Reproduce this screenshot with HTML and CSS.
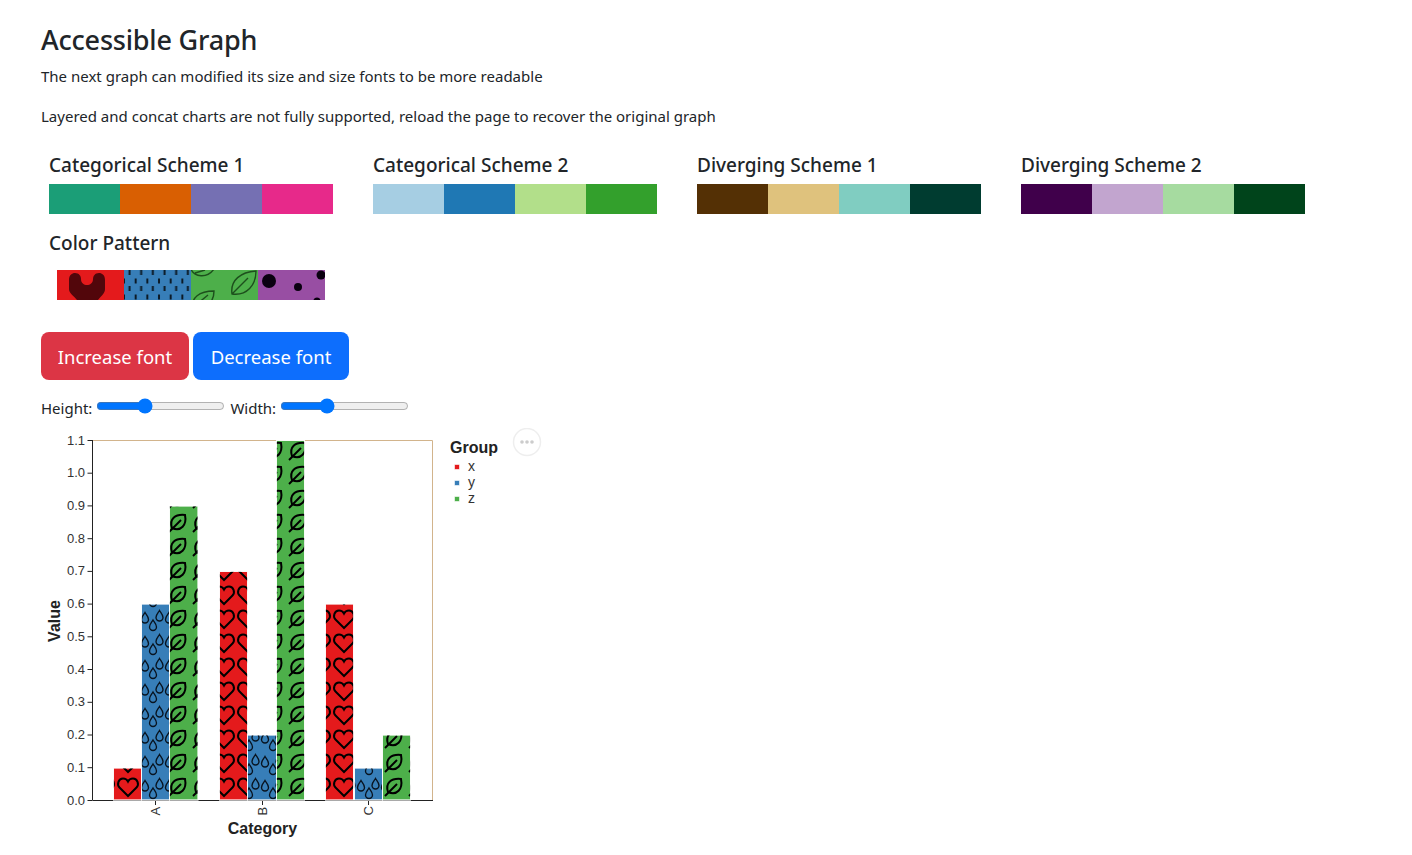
FILE: index.html
```html
<!DOCTYPE html>
<html lang="en">
<head>
  <meta charset="UTF-8">
  <title>Accessible Graph</title>
  <link rel="stylesheet" href="styles.css">
</head>
<body>
  <div class="container">
    <h1>Accessible Graph</h1>
    <p>The next graph can modified its size and size fonts to be more readable</p>
    <p>Layered and concat charts are not fully supported, reload the page to recover the original graph</p>

    <div class="schemes">
      <div class="scheme">
        <h5>Categorical Scheme 1</h5>
        <div class="swatches">
          <span style="background:#1b9e77"></span><span style="background:#d95f02"></span><span style="background:#7570b3"></span><span style="background:#e7298a"></span>
        </div>
      </div>
      <div class="scheme">
        <h5>Categorical Scheme 2</h5>
        <div class="swatches">
          <span style="background:#a6cee3"></span><span style="background:#1f78b4"></span><span style="background:#b2df8a"></span><span style="background:#33a02c"></span>
        </div>
      </div>
      <div class="scheme">
        <h5>Diverging Scheme 1</h5>
        <div class="swatches">
          <span style="background:#543005"></span><span style="background:#dfc27d"></span><span style="background:#80cdc1"></span><span style="background:#003c30"></span>
        </div>
      </div>
      <div class="scheme">
        <h5>Diverging Scheme 2</h5>
        <div class="swatches">
          <span style="background:#40004b"></span><span style="background:#c2a5cf"></span><span style="background:#a6dba0"></span><span style="background:#00441b"></span>
        </div>
      </div>
      <div class="scheme pattern-scheme">
        <h5>Color Pattern</h5>
        <svg class="pattern-strip" width="268" height="30" viewBox="0 0 268 30">
          <defs>
            <pattern id="dashes" patternUnits="userSpaceOnUse" x="67" y="0" width="11.67" height="16">
              <rect x="4.500" y="0" width="2" height="5" fill="#0b1a26"/>
              <rect x="-1" y="8.500" width="2" height="5" fill="#0b1a26"/>
              <rect x="10.670" y="8.500" width="2" height="5" fill="#0b1a26"/>
            </pattern>
            <clipPath id="greenCell"><rect x="134" width="67" height="30"/></clipPath>
          </defs>
          <rect width="67" height="30" fill="#e41a1c"/>
          <path d="M12 10C12 5 15 3 18 3C22 3 24 6 24 9C24 13 27 15 30 15C33 15 36 13 36 9C36 6 38 3 42 3C45 3 48 5 48 10V19C48 23 45 25 41 30H20C16 25 12 23 12 19Z" fill="#52060b"/>
          <rect x="67" width="67" height="30" fill="#377eb8"/>
          <rect x="67" width="67" height="30" fill="url(#dashes)"/>
          <rect x="134" width="67" height="30" fill="#4daf4a"/>
          <g clip-path="url(#greenCell)" fill="none" stroke="#1d4f1c" stroke-width="1.4">
            <path d="M175 24C173 10 184 2 199 1C199 15 190 26 175 24ZM175 24L191 8"/>
            <path d="M136 38C134 28 142 21 157 21C157 33 148 40 136 38ZM140 34L151 25"/>
            <path d="M134 -1C137 7 150 9 157 -1M138 3L148 0"/>
          </g>
          <rect x="201" width="67" height="30" fill="#984ea3"/>
          <g fill="#0a0010">
            <circle cx="212" cy="11" r="7"/>
            <circle cx="241" cy="17" r="4"/>
            <circle cx="264" cy="5" r="4.500"/>
            <circle cx="260" cy="31" r="3.500"/>
          </g>
        </svg>
      </div>
    </div>

    <div class="buttons">
      <button class="btn btn-danger">Increase font</button>
      <button class="btn btn-primary">Decrease font</button>
    </div>

    <div class="sliders">
      <label for="height">Height:</label>
      <input type="range" id="height" min="0" max="100" value="36">
      <label for="width">Width:</label>
      <input type="range" id="width" min="0" max="100" value="34">
    </div>

    <svg class="chart" width="520" height="420" viewBox="41 428 520 420">
      <defs>
        <pattern id="hearts" patternUnits="userSpaceOnUse" x="-4" y="7" width="24" height="24">
          <path d="M12 21L3.500 12.500C0.500 9.500 2.500 3.500 7 3.500C9 3.500 11 4.500 12 6.500C13 4.500 15 3.500 17 3.500C21.500 3.500 23.500 9.500 20.500 12.500Z" fill="none" stroke="#000" stroke-width="2"/>
        </pattern>
        <pattern id="drops" patternUnits="userSpaceOnUse" x="-4" y="8" width="24" height="24">
          <g fill="none" stroke="#071320" stroke-width="1.400">
            <path d="M13 12C14 14 16.500 16 16.500 19A3.500 3.500 0 0 1 9.500 19C9.500 16 12 14 13 12Z"/>
            <path d="M19.500 2.500C20.500 4.500 23 6.500 23 9.500A3.500 3.500 0 0 1 16 9.500C16 6.500 18.500 4.500 19.500 2.500Z"/>
            <path d="M5 4.500C6 6.500 8.500 8.500 8.500 11.500A3.500 3.500 0 0 1 1.500 11.500C1.500 8.500 4 6.500 5 4.500Z"/>
          </g>
        </pattern>
        <pattern id="leaves" patternUnits="userSpaceOnUse" x="-2" y="7" width="24" height="24">
          <g transform="translate(12 12)" fill="none" stroke="#000" stroke-width="2">
            <path d="M-6 5C-9 -4 -3 -9 7 -8C9 2 3 9 -6 5Z"/>
            <path d="M-9 9L3 -3"/>
          </g>
        </pattern>
      </defs>

      <!-- frame and axes -->
      <path class="frame" d="M92.500 440.500H432.500V800"/>
      <path class="axis" d="M92.500 440V800.500H433"/>
      <path class="axis" d="M87.500 440.500H92M87.500 473.200H92M87.500 505.900H92M87.500 538.700H92M87.500 571.400H92M87.500 604.100H92M87.500 636.800H92M87.500 669.500H92M87.500 702.300H92M87.500 735H92M87.500 767.700H92M87.500 800.500H92M155.500 800V805M262.500 800V805M368.500 800V805"/>

      <g class="tick-labels">
        <text x="85" y="445">1.1</text>
        <text x="85" y="477">1.0</text>
        <text x="85" y="510">0.9</text>
        <text x="85" y="543">0.8</text>
        <text x="85" y="575">0.7</text>
        <text x="85" y="608">0.6</text>
        <text x="85" y="641">0.5</text>
        <text x="85" y="674">0.4</text>
        <text x="85" y="706">0.3</text>
        <text x="85" y="739">0.2</text>
        <text x="85" y="772">0.1</text>
        <text x="85" y="805">0.0</text>
      </g>
      <g class="cat-labels">
        <text transform="translate(160 815.500) rotate(-90)">A</text>
        <text transform="translate(267 815.500) rotate(-90)">B</text>
        <text transform="translate(373 815.500) rotate(-90)">C</text>
      </g>
      <text class="axis-title" x="262.500" y="834" text-anchor="middle">Category</text>
      <text class="axis-title" transform="translate(60 621) rotate(-90)" text-anchor="middle">Value</text>

      <!-- bars -->
      <g class="bar" fill="#e41a1c">
        <rect x="113.500" y="768" width="28" height="32"/>
        <rect x="219.500" y="571.500" width="28" height="228.500"/>
        <rect x="325.500" y="604" width="28" height="196"/>
      </g>
      <g class="bar" fill="url(#hearts)">
        <rect x="113.500" y="768" width="28" height="32"/>
        <rect x="219.500" y="571.500" width="28" height="228.500"/>
        <rect x="325.500" y="604" width="28" height="196"/>
      </g>
      <g class="bar" fill="#377eb8">
        <rect x="141.500" y="604" width="28" height="196"/>
        <rect x="247.500" y="735" width="29" height="65"/>
        <rect x="354.500" y="768" width="28" height="32"/>
      </g>
      <g class="bar" fill="url(#drops)">
        <rect x="141.500" y="604" width="28" height="196"/>
        <rect x="247.500" y="735" width="29" height="65"/>
        <rect x="354.500" y="768" width="28" height="32"/>
      </g>
      <g class="bar" fill="#4daf4a">
        <rect x="169.500" y="506" width="28.500" height="294"/>
        <rect x="276.500" y="440.500" width="28" height="359.500"/>
        <rect x="382.500" y="735" width="28" height="65"/>
      </g>
      <g class="bar" fill="url(#leaves)">
        <rect x="169.500" y="506" width="28.500" height="294"/>
        <rect x="276.500" y="440.500" width="28" height="359.500"/>
        <rect x="382.500" y="735" width="28" height="65"/>
      </g>

      <!-- legend -->
      <text class="axis-title" x="450" y="453">Group</text>
      <rect class="legend-mark" x="454.500" y="464.500" width="5" height="5" fill="#e41a1c"/>
      <rect class="legend-mark" x="454.500" y="480.500" width="5" height="5" fill="#377eb8"/>
      <rect class="legend-mark" x="454.500" y="496.500" width="5" height="5" fill="#4daf4a"/>
      <text class="legend-label" x="468" y="471">x</text>
      <text class="legend-label" x="468" y="487">y</text>
      <text class="legend-label" x="468" y="503">z</text>

      <!-- actions menu -->
      <circle class="menu-circle" cx="527" cy="442" r="13.500"/>
      <g class="menu-dots">
        <circle cx="522" cy="442" r="1.800"/>
        <circle cx="527" cy="442" r="1.800"/>
        <circle cx="532" cy="442" r="1.800"/>
      </g>
    </svg>
  </div>
</body>
</html>
```

FILE: styles.css
```css
body {
  margin: 0;
  font-family: "Noto Sans", "Open Sans", sans-serif;
  font-size: 16px;
  line-height: 24px;
  color: #212529;
  background: white;
}
.container {
  padding: 23px 0 0 41px;
}
h1 {
  margin: 0 0 7px;
  font-size: 27px;
  line-height: 34px;
  font-weight: 500;
  letter-spacing: -0.2px;
}
p {
  margin: 0 0 16px;
  font-size: 15px;
}
.schemes {
  display: grid;
  grid-template-columns: repeat(4, 324px);
  row-gap: 17px;
  margin-top: 25px;
}
.scheme {
  padding-left: 8px;
}
h5 {
  margin: 0 0 7px;
  font-size: 19px;
  line-height: 24px;
  font-weight: 500;
}
.swatches {
  display: flex;
  width: 284px;
  height: 30px;
}
.swatches span {
  flex: 1;
}
.pattern-strip {
  display: block;
  margin: 15px 0 0 8px;
}
.pattern-scheme h5 {
  margin-bottom: 0;
}
.buttons {
  display: flex;
  gap: 4px;
  margin-top: 32px;
}
.btn {
  height: 48px;
  padding: 1px 0 0;
  border: none;
  border-radius: 8px;
  color: white;
  font-family: inherit;
  font-size: 18.500px;
  white-space: nowrap;
  cursor: pointer;
}
.btn-danger {
  width: 148px;
  background: #dc3545;
}
.btn-primary {
  width: 156px;
  background: #0d6efd;
}
.sliders {
  display: flex;
  align-items: flex-start;
  margin-top: 16px;
  height: 32px;
  font-size: 15px;
}
.sliders input {
  width: 129px;
  margin: 2px 5px 0 4px;
}
.chart {
  display: block;
}
.frame {
  fill: none;
  stroke: tan;
}
.axis {
  fill: none;
  stroke: #222;
}
.tick-labels text {
  font-family: "Liberation Sans", sans-serif;
  font-size: 13px;
  fill: #333;
  text-anchor: end;
}
.cat-labels text {
  font-family: "Liberation Sans", sans-serif;
  font-size: 13px;
  fill: #333;
}
.axis-title {
  font-family: "Liberation Sans", sans-serif;
  font-size: 16px;
  font-weight: bold;
  fill: #222;
}
.bar rect {
  stroke: rgba(255,255,255,0.75);
  stroke-width: 1;
}
.legend-mark {
  stroke: rgba(255,255,255,0.6);
}
.legend-label {
  font-family: "Liberation Sans", sans-serif;
  font-size: 14px;
  fill: #333;
}
.menu-circle {
  fill: white;
  stroke: #eee;
  stroke-width: 1.5;
}
.menu-dots {
  fill: #ccc;
}
```
